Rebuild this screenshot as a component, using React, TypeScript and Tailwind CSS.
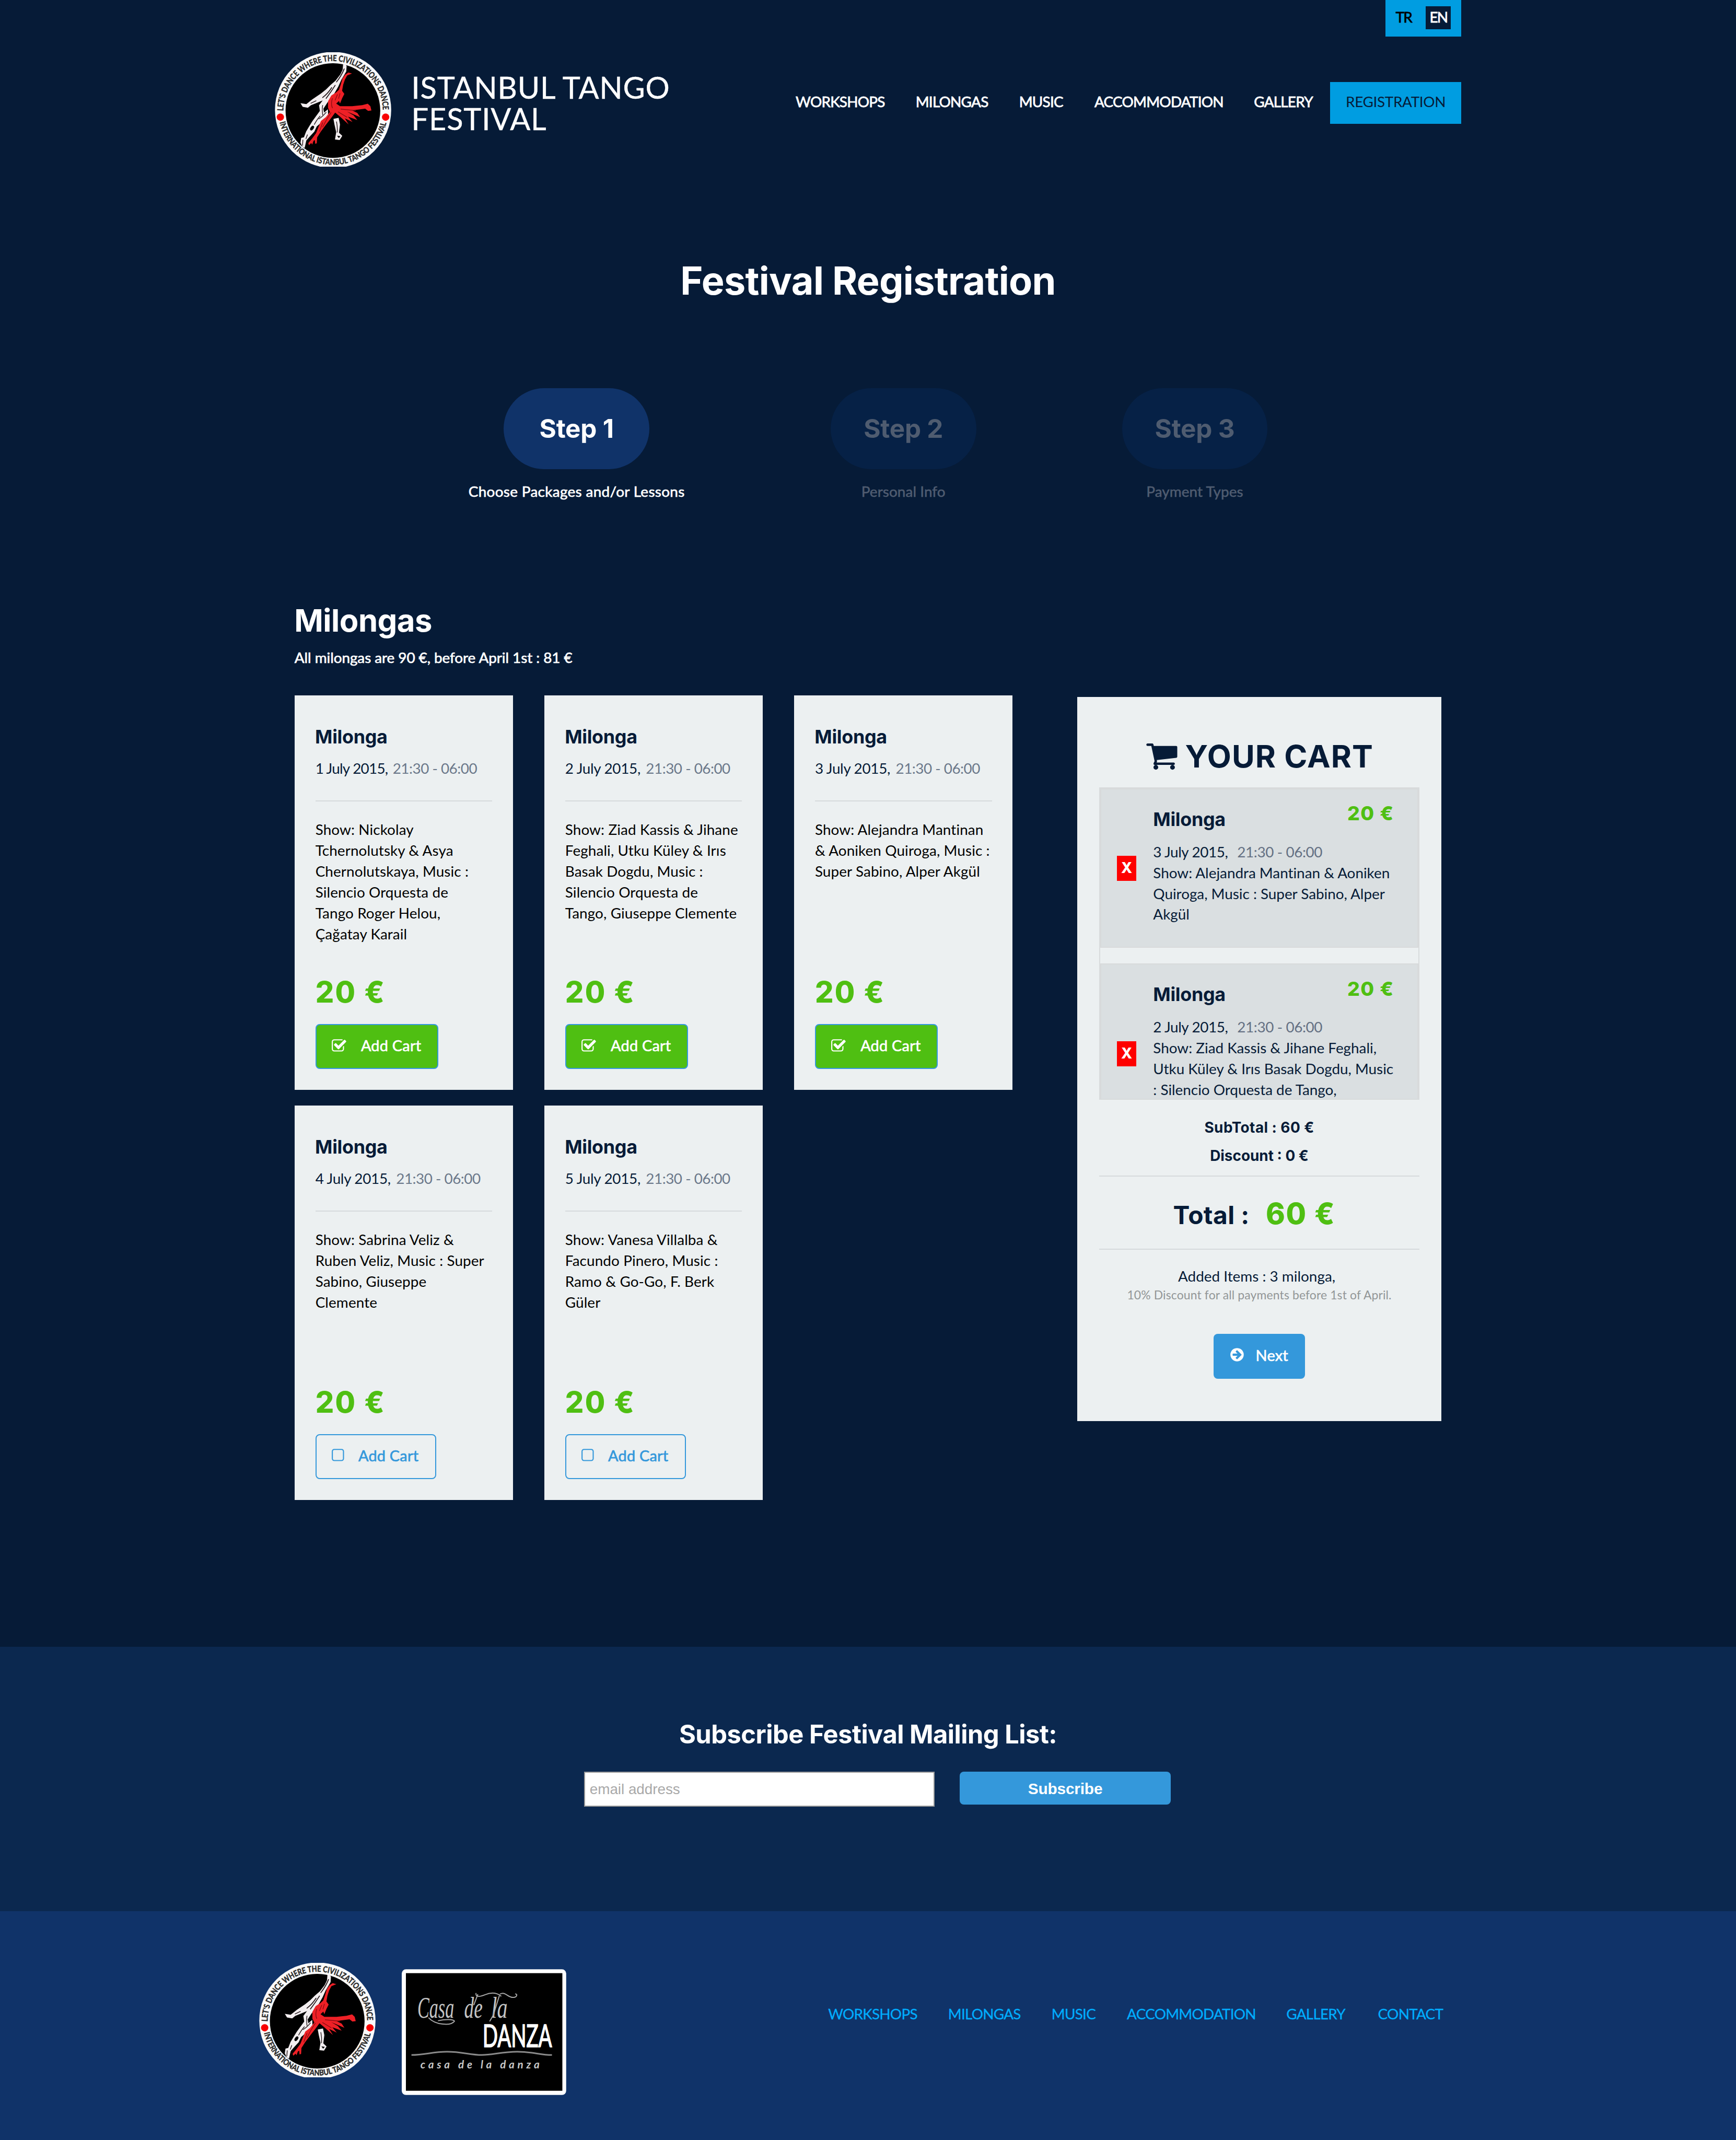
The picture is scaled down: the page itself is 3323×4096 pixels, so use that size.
import React from "react";

type Milonga = {
  date: string;
  dateClass: string;
  time: string;
  lines: string[];
  added: boolean;
};

const MILONGAS: Milonga[] = [
  {
    date: "1 July 2015,",
    dateClass: "w-[74.3px] tracking-[-0.38px]",
    time: "21:30 - 06:00",
    lines: [
      "Show: Nickolay",
      "Tchernolutsky & Asya",
      "Chernolutskaya, Music :",
      "Silencio Orquesta de",
      "Tango Roger Helou,",
      "Çağatay Karail",
    ],
    added: true,
  },
  {
    date: "2 July 2015,",
    dateClass: "w-[77.6px] tracking-[-0.15px]",
    time: "21:30 - 06:00",
    lines: [
      "Show: Ziad Kassis & Jihane",
      "Feghali, Utku Küley & Irıs",
      "Basak Dogdu, Music :",
      "Silencio Orquesta de",
      "Tango, Giuseppe Clemente",
    ],
    added: true,
  },
  {
    date: "3 July 2015,",
    dateClass: "w-[77.6px] tracking-[-0.15px]",
    time: "21:30 - 06:00",
    lines: ["Show: Alejandra Mantinan", "& Aoniken Quiroga, Music :", "Super Sabino, Alper Akgül"],
    added: true,
  },
  {
    date: "4 July 2015,",
    dateClass: "w-[77.6px] tracking-[-0.15px]",
    time: "21:30 - 06:00",
    lines: ["Show: Sabrina Veliz &", "Ruben Veliz, Music : Super", "Sabino, Giuseppe", "Clemente"],
    added: false,
  },
  {
    date: "5 July 2015,",
    dateClass: "w-[77.6px] tracking-[-0.15px]",
    time: "21:30 - 06:00",
    lines: ["Show: Vanesa Villalba &", "Facundo Pinero, Music :", "Ramo & Go-Go, F. Berk", "Güler"],
    added: false,
  },
];

const CART_ITEMS = [
  {
    date: "3 July 2015,",
    time: "21:30 - 06:00",
    lines: ["Show: Alejandra Mantinan & Aoniken", "Quiroga, Music : Super Sabino, Alper", "Akgül"],
  },
  {
    date: "2 July 2015,",
    time: "21:30 - 06:00",
    lines: [
      "Show: Ziad Kassis & Jihane Feghali,",
      "Utku Küley & Irıs Basak Dogdu, Music",
      ": Silencio Orquesta de Tango,",
      "Giuseppe Clemente",
    ],
  },
];

const NAV = [
  { label: "WORKSHOPS", width: "w-[115.3px]" },
  { label: "MILONGAS", width: "w-[99.4px]" },
  { label: "MUSIC", width: "w-[72.4px]" },
  { label: "ACCOMMODATION", width: "w-[153.2px]" },
  { label: "GALLERY", width: "w-[73.2px]" },
];

const FOOTER_NAV = [
  { label: "WORKSHOPS", width: "w-[115.3px]" },
  { label: "MILONGAS", width: "w-[99.4px]" },
  { label: "MUSIC", width: "w-[72.4px]" },
  { label: "ACCOMMODATION", width: "w-[153.2px]" },
  { label: "GALLERY", width: "w-[88px]" },
  { label: "CONTACT", width: "w-[70px]" },
];

function FestivalLogo({ id }: { id: string }) {
  return (
    <svg viewBox="24 24 672 660" className="block h-[110px] w-[112px] shrink-0">
      <defs>
        <path id={`${id}-top`} d="M73 362 A287 287 0 0 1 647 362" />
        <path id={`${id}-bottom`} d="M52 428 A316 316 0 0 0 668 428" />
      </defs>
      <circle cx="360" cy="357" r="335" fill="#fafafa" />
      <circle cx="359" cy="360" r="273" fill="#000" />
      <circle cx="56" cy="398" r="21" fill="#f80000" />
      <circle cx="663" cy="398" r="21" fill="#f80000" />
      <g fontFamily="Lato, sans-serif" fontWeight="700" fill="#2a2a2a" stroke="#2a2a2a" strokeWidth="1.5">
        <text fontSize="48">
          <textPath href={`#${id}-top`} textLength="896" lengthAdjust="spacingAndGlyphs">
            LET'S DANCE WHERE THE CIVILIZATIONS DANCE
          </textPath>
        </text>
        <text fontSize="46">
          <textPath href={`#${id}-bottom`} textLength="846" lengthAdjust="spacingAndGlyphs">
            INTERNATIONAL ISTANBUL TANGO FESTIVAL
          </textPath>
        </text>
      </g>
      <path
        fill="#f3eef0"
        d="M418 92 Q434 92 438 104 L436 135 Q422 160 408 182 L390 222 L366 264 L345 290 L325 318 L304 350 L308 372 L330 352 L332 392 L300 422 L266 452 L252 482 L230 505 L206 532 L196 576 L184 570 L172 545 L176 518 L192 514 L205 480 L222 452 L240 422 L262 392 L284 362 L279 330 L300 302 L262 318 L232 330 L215 344 L185 339 L172 318 L206 323 L240 296 L290 262 L320 238 L345 213 L374 188 L402 152 L415 125 Z"
      />
      <path fill="#f3eef0" d="M362 408 L392 402 L400 440 L394 488 L413 506 L398 530 L371 527 L378 485 L368 440 Z" />
      <g fill="none" stroke="#1c1013" strokeLinecap="round">
        <path strokeWidth="5" d="M424 120 Q408 160 380 195 M352 228 Q330 262 300 285 M372 215 Q350 250 320 290" />
        <path strokeWidth="4" d="M300 330 Q296 350 300 385 M285 392 Q268 410 252 440 M320 370 Q300 395 278 408" />
        <path strokeWidth="4" d="M186 530 L184 560 M212 500 L204 522 M380 425 Q386 455 384 485 M262 304 L232 318" />
      </g>
      <ellipse cx="239" cy="461" rx="9" ry="15" transform="rotate(35 239 461)" fill="#000" />
      <path d="M383 505 L403 508 L393 519 Z" fill="#000" />
      <path
        fill="#ee2026"
        d="M469 147 L448 141 L430 153 L414 176 L403 214 L394 240 L378 255 L350 273 L331 306 L331 345 L342 368 L318 398 L290 420 L276 455 L262 490 L240 520 L217 548 L221 559 L234 547 L240 556 L247 535 L255 530 L257 552 L266 549 L268 515 L290 480 L320 440 L350 402 L372 372 L400 395 L450 440 L428 405 L472 426 L446 395 L500 415 L478 388 L440 366 L516 398 L500 374 L470 359 L545 349 L562 362 L581 360 L575 335 L560 321 L528 329 L470 335 L400 335 L378 320 L394 305 L400 320 L412 290 L425 264 L412 246 L418 212 L428 182 L441 158 Z"
      />
      <g fill="none" stroke="#7d0a10" strokeWidth="3.5" strokeLinecap="round">
        <path d="M356 290 Q346 320 356 345 M385 268 L372 300 M400 262 L392 290" />
        <path d="M348 372 Q322 410 300 455 M390 368 L440 398 M405 352 L490 360 M300 430 L282 480" />
      </g>
    </svg>
  );
}

function CasaLogo() {
  return (
    <svg viewBox="24 26 948 724" className="block h-[121px] w-[158px] shrink-0">
      <rect x="24" y="26" width="948" height="724" rx="24" fill="#fff" />
      <rect x="48" y="48" width="902" height="678" fill="#000" />
      <g fontFamily="'Liberation Serif', serif" fontStyle="italic" fontSize="172" fill="#c4c4c4">
        <text x="114" y="305" textLength="212" lengthAdjust="spacingAndGlyphs">
          Casa
        </text>
        <text x="384" y="305" textLength="106" lengthAdjust="spacingAndGlyphs">
          de
        </text>
        <text x="540" y="305" textLength="94" lengthAdjust="spacingAndGlyphs">
          la
        </text>
      </g>
      <g fill="none" stroke="#a8a8a8" strokeWidth="6" strokeLinecap="round">
        <path d="M180 306 C215 345 305 355 328 325 C322 312 270 314 235 322" />
        <path d="M452 165 C450 190 480 182 505 172 C540 158 570 160 596 180 M592 168 C618 152 636 188 664 188 C690 188 692 168 680 168" />
        <path d="M586 180 L552 290 L532 324 M462 172 L440 230" />
      </g>
      <text
        x="490"
        y="473"
        textLength="400"
        lengthAdjust="spacingAndGlyphs"
        fontFamily="Lato, sans-serif"
        fontSize="180"
        fill="#fff"
        stroke="#fff"
        strokeWidth="5"
      >
        DANZA
      </text>
      <path
        d="M80 520 C160 520 200 501 285 501 S420 520 485 520 S600 501 690 501 S820 520 890 520"
        fill="none"
        stroke="#8a8a8a"
        strokeWidth="9"
      />
      <text
        x="132"
        y="596"
        textLength="686"
        fontFamily="Lato, sans-serif"
        fontStyle="italic"
        fontWeight="700"
        fontSize="62"
        fill="#c8c8c8"
      >
        casa de la danza
      </text>
    </svg>
  );
}

function CheckSquareIcon() {
  return (
    <svg viewBox="0 0 1792 1792" className="ml-[14.3px] mt-[12.4px] h-[15px] w-[15px] shrink-0" fill="currentColor">
      <path d="M1472 930v318q0 119-84.5 203.5t-203.5 84.5h-832q-119 0-203.5-84.5t-84.5-203.5v-832q0-119 84.5-203.5t203.5-84.5h832q63 0 117 25 15 7 18 23 3 17-9 29l-49 49q-10 10-23 10-3 0-9-2-23-6-45-6h-832q-66 0-113 47t-47 113v832q0 66 47 113t113 47h832q66 0 113-47t47-113v-254q0-13 9-22l64-64q10-10 23-10 6 0 12 3 20 8 20 29zm231-489l-814 814q-24 24-57 24t-57-24l-430-430q-24-24-24-57t24-57l110-110q24-24 57-24t57 24l263 263 647-647q24-24 57-24t57 24l110 110q24 24 24 57t-24 57z" />
    </svg>
  );
}

function SquareIcon() {
  return (
    <svg viewBox="128 0 1792 1792" className="ml-[14px] mt-[12.1px] h-[15px] w-[15px] shrink-0" fill="currentColor">
      <path d="M1312 256h-832q-66 0-113 47t-47 113v832q0 66 47 113t113 47h832q66 0 113-47t47-113v-832q0-66-47-113t-113-47zm288 160v832q0 119-84.5 203.5t-203.5 84.5h-832q-119 0-203.5-84.5t-84.5-203.5v-832q0-119 84.5-203.5t203.5-84.5h832q119 0 203.5 84.5t84.5 203.5z" />
    </svg>
  );
}

function ArrowCircleIcon() {
  return (
    <svg viewBox="0 0 1792 1792" className="ml-[15.3px] mt-[12.8px] h-[15px] w-[15px] shrink-0" fill="currentColor">
      <path d="M1413 896q0-27-18-45l-91-91-362-362q-18-18-45-18t-45 18l-91 91q-18 18-18 45t18 45l189 189h-502q-26 0-45 19t-19 45v128q0 26 19 45t45 19h502l-189 189q-18 18-18 45t18 45l91 91q18 18 45 18t45-18l362-362 91-91q18-18 18-45zm251 0q0 209-103 385.5t-279.5 279.5-385.5 103-385.5-103-279.5-279.5-103-385.5 103-385.5 279.5-279.5 385.5-103 385.5 103 279.5 279.5 103 385.5z" />
    </svg>
  );
}

function CartIcon() {
  return (
    <svg viewBox="0 0 1792 1792" className="mt-[3.3px] h-8 w-8 shrink-0" fill="currentColor">
      <path d="M704 1536q0 52-38 90t-90 38-90-38-38-90 38-90 90-38 90 38 38 90zm896 0q0 52-38 90t-90 38-90-38-38-90 38-90 90-38 90 38 38 90zm128-1088v512q0 24-16.5 42.5t-40.5 21.5l-1044 122q13 60 13 70 0 16-24 64h920q26 0 45 19t19 45-19 45-45 19h-1024q-26 0-45-19t-19-45q0-11 8-31.5t16-36 21.5-40 15.5-29.5l-177-823h-204q-26 0-45-19t-19-45 19-45 45-19h256q16 0 28.5 6.5t19.5 15.5 13 24.5 8 26 5.5 29.5 4.5 26h1201q26 0 45 19t19 45z" />
    </svg>
  );
}

function Header() {
  return (
    <header className="mx-auto flex h-[200px] w-[1140px] justify-between text-white">
      <div className="flex pt-[50px]">
        <FestivalLogo id="header-logo" />
        <div className="ml-[19.3px] mt-[18.7px] text-[29px] leading-[30px] tracking-[0.42px] [-webkit-text-stroke:0.2px]">
          ISTANBUL TANGO
          <br />
          FESTIVAL
        </div>
      </div>
      <div className="flex flex-col items-end text-sm">
        <div className="flex h-[35px] w-[73px] bg-[#009de1] pt-1.5 leading-[20.6px] tracking-[-0.9px] [-webkit-text-stroke:0.4px]">
          <span className="ml-2.5 w-[29px] text-black">TR</span>
          <span className="h-[22px] w-6 bg-[#061b37] pl-[3.6px]">EN</span>
        </div>
        <nav className="mt-11 flex h-10 leading-[38px]">
          {NAV.map((n) => (
            <a key={n.label} className={`${n.width} whitespace-nowrap tracking-[-0.38px] [-webkit-text-stroke:0.4px]`}>
              {n.label}
            </a>
          ))}
          <a className="w-[126px] bg-[#009de1] pl-[15.1px] tracking-[-0.17px] text-[#061b37]">REGISTRATION</a>
        </nav>
      </div>
    </header>
  );
}

function Step({ title, caption, active, className }: { title: string; caption: string; active?: boolean; className?: string }) {
  return (
    <div className={`flex w-[280px] flex-col items-center ${active ? "text-white" : "text-[#4f5c70]"} ${className ?? ""}`}>
      <div
        className={`flex h-[78px] w-[140px] items-center justify-center rounded-[40px] pb-px font-[Inter] text-[24.8px] font-bold tracking-[-0.1px] ${
          active ? "bg-[#103369]" : "bg-[#062146]"
        }`}
      >
        {title}
      </div>
      <div
        className={`mt-[11.4px] text-sm leading-5 ${
          active ? "tracking-[0.17px] [-webkit-text-stroke:0.35px]" : "tracking-[0.04px] [-webkit-text-stroke:0.3px]"
        }`}
      >
        {caption}
      </div>
    </div>
  );
}

function MilongaCard({ item }: { item: Milonga }) {
  return (
    <article className="flex h-[379px] w-[210px] flex-col items-start bg-[#ecf0f1] px-5 pb-5 pt-[28.3px] text-[#061b37]">
      <h3 className="-ml-[0.3px] font-[Inter] text-lg font-bold leading-6 tracking-[-0.15px]">Milonga</h3>
      <div className="mt-[8.1px] flex text-sm leading-5">
        <span className={`whitespace-nowrap ${item.dateClass}`}>{item.date}</span>
        <span className="whitespace-nowrap tracking-[-0.25px] text-[#6b788a]">{item.time}</span>
      </div>
      <div className="mt-[20.7px] h-px w-full shrink-0 bg-[#d6dadc]" />
      <p className="mt-[17.2px] flex-1 whitespace-pre text-sm leading-5 tracking-[0.05px] text-black">
        {item.lines.join("\n")}
      </p>
      <div className="font-[Inter] text-[28px] font-extrabold leading-[34px] tracking-[1.2px] text-[#4fbf12]">20 €</div>
      {item.added ? (
        <button className="mt-3.5 flex h-[43px] w-[118px] rounded-[4px] border-[1.01px] border-[#3498db] bg-[#4fbf12] text-[14.5px] leading-[39.6px] text-white">
          <CheckSquareIcon />
          <span className="ml-[13.5px] whitespace-nowrap tracking-[0.12px] [-webkit-text-stroke:0.35px]">Add Cart</span>
        </button>
      ) : (
        <button className="mt-3.5 flex h-[43px] w-[116px] rounded-[4px] border-[1.01px] border-[#3498db] text-[14.5px] leading-[39.6px] text-[#3498db]">
          <SquareIcon />
          <span className="ml-[11.3px] whitespace-nowrap tracking-[0.12px] [-webkit-text-stroke:0.35px]">Add Cart</span>
        </button>
      )}
    </article>
  );
}

function Cart() {
  return (
    <aside className="mt-[91.2px] flex w-[350px] flex-col items-center bg-[#ecf0f1] px-[21px] pb-[41px] pt-[37px] text-[#061b37]">
      <h2 className="flex h-10 gap-[6.4px] font-[Inter] text-[30px] font-bold leading-[40.6px] tracking-[0.55px]">
        <CartIcon />
        YOUR CART
      </h2>
      <div className="mt-2.5 flex h-[300px] w-full flex-col gap-[15px] overflow-hidden border-[1.01px] border-[#d8dbdc]">
        {CART_ITEMS.map((c) => (
          <div key={c.date} className="flex shrink-0 items-center border-[1.01px] border-[#d8dadb] bg-[#dadfe1]">
            <button className="ml-[15px] h-6 w-[19px] shrink-0 bg-[#fe0000] text-center font-[Inter] text-sm font-extrabold leading-[21.6px] text-white">
              X
            </button>
            <div className="ml-4 flex-1 pb-[21.2px]">
              <div className="flex justify-between pr-[22.5px]">
                <h3 className="mt-[16.8px] font-[Inter] text-lg font-bold leading-6 tracking-[-0.15px]">Milonga</h3>
                <span className="mt-[13.2px] font-[Inter] text-[18.8px] font-extrabold leading-5 tracking-[0.7px] text-[#4fbf12]">
                  20 €
                </span>
              </div>
              <div className="mt-[9.3px] flex text-sm leading-5">
                <span className="w-[80.8px] whitespace-nowrap tracking-[-0.2px]">{c.date}</span>
                <span className="whitespace-nowrap tracking-[-0.2px] text-[#647083]">{c.time}</span>
              </div>
              <p className="whitespace-pre text-sm leading-5 tracking-[-0.01px]">{c.lines.join("\n")}</p>
            </div>
          </div>
        ))}
      </div>
      <div className="mt-[13.8px] text-center font-[Inter] text-sm font-bold leading-[27px]">
        <p className="tracking-[0.22px]">SubTotal : 60 €</p>
        <p>Discount : 0 €</p>
      </div>
      <div className="mt-[5.2px] h-px w-full bg-[#d6dadc]" />
      <div className="mt-[15.5px] flex h-10 w-full items-baseline pl-[71.2px] font-[Inter] leading-10">
        <span className="w-[89px] text-2xl font-bold tracking-[0.2px]">Total :</span>
        <span className="text-[28px] font-extrabold tracking-[0.9px] text-[#4fbf12]">60 €</span>
      </div>
      <div className="mt-[13.5px] h-px w-full bg-[#d6dadc]" />
      <p className="mt-[15.8px] pr-[5px] text-sm leading-5">Added Items : 3 milonga,</p>
      <p className="text-[11.5px] leading-4 tracking-[0.07px] text-[#929697]">
        10% Discount for all payments before 1st of April.
      </p>
      <button className="mt-[29.2px] flex h-[43px] w-[88px] rounded-[4px] bg-[#3498db] text-[14.5px] leading-[41.4px] text-white">
        <ArrowCircleIcon />
        <span className="ml-[10.2px] tracking-[0.12px] [-webkit-text-stroke:0.35px]">Next</span>
      </button>
    </aside>
  );
}

export default function App() {
  return (
    <div className="h-[2056px] w-[1668px] overflow-hidden bg-[#061b37] font-[Lato,sans-serif] [zoom:1.9922]">
      <div className="h-[1582px]">
        <Header />
        <h1 className="mt-[50.1px] text-center font-[Inter] text-[37px] font-bold leading-10 tracking-[-0.35px] text-white">
          Festival Registration
        </h1>
        <div className="ml-[414px] mt-[82.9px] flex">
          <Step title="Step 1" caption="Choose Packages and/or Lessons" active />
          <Step title="Step 2" caption="Personal Info" className="ml-[34px]" />
          <Step title="Step 3" caption="Payment Types" />
        </div>
        <main className="mx-auto mt-[95.9px] flex w-[1102px] items-start justify-between">
          <section className="w-[690px]">
            <h2 className="-ml-[0.3px] font-[Inter] text-[30px] font-bold leading-9 tracking-[-0.25px] text-white">
              Milongas
            </h2>
            <p className="mt-[7.8px] text-sm leading-5 tracking-[-0.03px] text-white [-webkit-text-stroke:0.35px]">
              All milongas are 90 €, before April 1st : 81 €
            </p>
            <div className="mt-[25.9px] flex flex-wrap gap-x-[30px] gap-y-[15px]">
              {MILONGAS.map((m) => (
                <MilongaCard key={m.date} item={m} />
              ))}
            </div>
          </section>
          <Cart />
        </main>
      </div>
      <section className="h-[254px] bg-[#0b284f] pt-[69.6px]">
        <h2 className="text-center font-[Inter] text-[24.5px] font-bold leading-[30px] tracking-[-0.25px] text-white">
          Subscribe Festival Mailing List:
        </h2>
        <form className="ml-[561px] mt-[20.4px] flex gap-6 font-['Liberation_Sans',sans-serif]">
          <input
            placeholder="email address"
            className="h-[34px] w-[337px] border-[1.01px] border-[#999] bg-white pl-[4.6px] pr-1 pt-[0.6px] text-sm tracking-[-0.02px] placeholder:text-[#a9a9a9]"
          />
          <button className="h-8 w-[203px] rounded-[4px] bg-[#3498db] pt-[1.6px] text-[15px] font-bold tracking-[-0.1px] text-white">
            Subscribe
          </button>
        </form>
      </section>
      <footer className="flex h-[220px] bg-[#103369] pl-[249px]">
        <div className="mt-[50px]">
          <FestivalLogo id="footer-logo" />
        </div>
        <div className="ml-[25px] mt-14">
          <CasaLogo />
        </div>
        <nav className="ml-[251.7px] mt-[88.8px] flex text-sm leading-5 tracking-[-0.38px] text-[#00aeff] [-webkit-text-stroke:0.15px]">
          {FOOTER_NAV.map((n) => (
            <a key={n.label} className={`${n.width} whitespace-nowrap`}>
              {n.label}
            </a>
          ))}
        </nav>
      </footer>
    </div>
  );
}
